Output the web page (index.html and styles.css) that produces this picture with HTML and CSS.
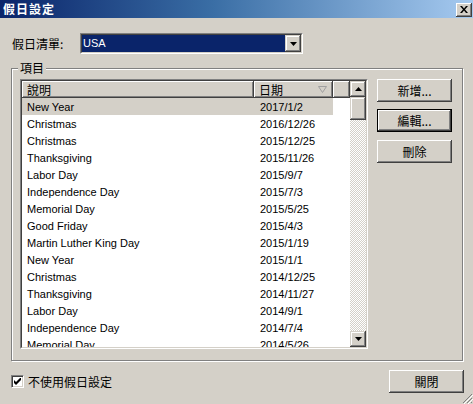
FILE: index.html
```html
<!DOCTYPE html>
<html lang="zh-Hant">
<head>
<meta charset="utf-8">
<title>假日設定</title>
<link rel="stylesheet" href="styles.css">
</head>
<body>
<div class="window">
  <div class="titlebar">
    <span class="title">假日設定</span>
    <span class="tb-close"><svg width="8" height="7" viewBox="0 0 8 7"><path d="M0 0h2l2 2.5L6 0h2L5 3.5 8 7H6L4 4.5 2 7H0l3-3.5z" fill="#000"/></svg></span>
  </div>
  <div class="content">
    <div class="combo-row">
      <span class="lbl cjk">假日清單:</span>
      <div class="combo">
        <span class="combo-value">USA</span>
        <span class="combo-btn"><svg width="7" height="4" viewBox="0 0 7 4"><path d="M0 0h7L3.5 4z" fill="#000"/></svg></span>
      </div>
    </div>

    <div class="group">
      <span class="legend cjk">項目</span>
      <div class="listview">
        <div class="lv-inner">
          <div class="lv-main">
            <div class="lv-header">
              <div class="hd hd-name cjk">說明</div>
              <div class="hd hd-date cjk">日期<svg class="sort" width="9" height="7" viewBox="0 0 9 7"><path d="M0.5 0.5h8L4.5 6.5z" fill="none" stroke="#a0a0a0"/></svg></div>
              <div class="hd hd-fill"></div>
            </div>
            <div class="lv-rows">
              <div class="row selected"><span class="c-name">New Year</span><span class="c-date">2017/1/2</span></div>
              <div class="row"><span class="c-name">Christmas</span><span class="c-date">2016/12/26</span></div>
              <div class="row"><span class="c-name">Christmas</span><span class="c-date">2015/12/25</span></div>
              <div class="row"><span class="c-name">Thanksgiving</span><span class="c-date">2015/11/26</span></div>
              <div class="row"><span class="c-name">Labor Day</span><span class="c-date">2015/9/7</span></div>
              <div class="row"><span class="c-name">Independence Day</span><span class="c-date">2015/7/3</span></div>
              <div class="row"><span class="c-name">Memorial Day</span><span class="c-date">2015/5/25</span></div>
              <div class="row"><span class="c-name">Good Friday</span><span class="c-date">2015/4/3</span></div>
              <div class="row"><span class="c-name">Martin Luther King Day</span><span class="c-date">2015/1/19</span></div>
              <div class="row"><span class="c-name">New Year</span><span class="c-date">2015/1/1</span></div>
              <div class="row"><span class="c-name">Christmas</span><span class="c-date">2014/12/25</span></div>
              <div class="row"><span class="c-name">Thanksgiving</span><span class="c-date">2014/11/27</span></div>
              <div class="row"><span class="c-name">Labor Day</span><span class="c-date">2014/9/1</span></div>
              <div class="row"><span class="c-name">Independence Day</span><span class="c-date">2014/7/4</span></div>
              <div class="row"><span class="c-name">Memorial Day</span><span class="c-date">2014/5/26</span></div>
            </div>
          </div>
          <div class="scrollbar">
            <div class="sb-btn"><svg width="7" height="4" viewBox="0 0 7 4"><path d="M3.5 0L7 4H0z" fill="#000"/></svg></div>
            <div class="sb-thumb"></div>
            <div class="sb-track"></div>
            <div class="sb-btn"><svg width="7" height="4" viewBox="0 0 7 4"><path d="M0 0h7L3.5 4z" fill="#000"/></svg></div>
          </div>
        </div>
      </div>
      <div class="buttons">
        <button class="btn cjk">新增...</button>
        <button class="btn btn-default cjk">編輯...</button>
        <button class="btn cjk">刪除</button>
      </div>
    </div>

    <div class="footer">
      <label class="check cjk"><span class="box"><svg width="7" height="7" viewBox="0 0 7 7"><path d="M0 2v3l2 2 5-5V-1L2 4z" fill="#000"/></svg></span>不使用假日設定</label>
      <button class="btn btn-close cjk">關閉</button>
    </div>
  </div>
  <svg class="grip" width="11" height="11" viewBox="0 0 11 11"><path d="M10 1L1 10M10 5L5 10M10 9L9 10" stroke="#808080" stroke-width="1"/><path d="M11 2L2 11M11 6L6 11" stroke="#fff" stroke-width="1"/></svg>
</div>
</body>
</html>
```

FILE: styles.css
```css
* { box-sizing: border-box; }
html, body { margin: 0; padding: 0; }
body {
  width: 473px;
  height: 404px;
  overflow: hidden;
  background: #d4d0c8;
  font-family: "Liberation Sans", "Noto Sans CJK TC", sans-serif;
  font-size: 11px;
  color: #000;
}
.cjk {
  font-family: "Noto Sans CJK TC", "Liberation Sans", sans-serif;
  font-size: 12px;
}
.window {
  position: relative;
  width: 473px;
  height: 404px;
}
.titlebar {
  height: 18px;
  display: flex;
  align-items: center;
  padding: 0 1px 0 3px;
  background: linear-gradient(to right, #0a246a 0%, #3a6ea5 45%, #a6caf0 100%);
}
.title {
  font-family: "Noto Sans CJK TC", sans-serif;
  font-weight: bold;
  font-size: 12px;
  letter-spacing: 1px;
  color: #fff;
  line-height: 18px;
}
.tb-close {
  margin-left: auto;
  width: 16px;
  height: 14px;
  display: flex;
  align-items: center;
  justify-content: center;
  background: #d4d0c8;
  box-shadow: inset -1px -1px #404040, inset 1px 1px #fff, inset -2px -2px #808080;
  margin-top: 1px;
}
.content {
  padding: 0 10px 0 11px;
}
.combo-row {
  display: flex;
  align-items: center;
  margin-top: 15px;
  height: 21px;
}
.lbl {
  width: 69px;
  padding-left: 1px;
}
.combo {
  width: 223px;
  height: 21px;
  display: flex;
  border: 1px solid;
  border-color: #808080 #fff #fff #808080;
  padding: 0;
  position: relative;
}
.combo::before {
  content: "";
  position: absolute;
  inset: 0;
  border: 1px solid;
  border-color: #404040 #d4d0c8 #d4d0c8 #404040;
  pointer-events: none;
}
.combo-value {
  flex: 1;
  margin: 1px 0 1px 1px;
  background: #0a246a;
  color: #fff;
  line-height: 17px;
  padding-left: 1px;
}
.combo-btn {
  width: 16px;
  height: 17px;
  margin: 1px 1px 1px 0;
  display: flex;
  align-items: center;
  justify-content: center;
  background: #d4d0c8;
  box-shadow: inset -1px -1px #404040, inset 1px 1px #d4d0c8, inset -2px -2px #808080, inset 2px 2px #fff;
}
.group {
  position: relative;
  margin-top: 14px;
  width: 452px;
  height: 293px;
  border: 1px solid #808080;
  box-shadow: inset 1px 1px #fff, 1px 1px #fff;
  display: flex;
  align-items: flex-start;
  padding: 10px 10px 11px 8px;
}
.legend {
  position: absolute;
  left: 6px;
  top: -9px;
  padding: 0 2px;
  background: #d4d0c8;
  line-height: 16px;
}
.listview {
  width: 348px;
  height: 270px;
  border: 1px solid;
  border-color: #808080 #fff #fff #808080;
}
.lv-inner {
  width: 100%;
  height: 100%;
  border: 1px solid;
  border-color: #404040 #d4d0c8 #d4d0c8 #404040;
  display: flex;
  background: #fff;
}
.lv-main {
  width: 328px;
  height: 100%;
  overflow: hidden;
  display: flex;
  flex-direction: column;
}
.lv-header {
  display: flex;
  height: 17px;
  flex: none;
}
.hd {
  height: 17px;
  background: #d4d0c8;
  box-shadow: inset -1px -1px #404040, inset 1px 1px #fff, inset -2px -2px #808080;
  padding-left: 5px;
  line-height: 16px;
  display: flex;
  align-items: center;
}
.hd-name { width: 232px; }
.hd-date { width: 79px; }
.hd-fill { width: 17px; }
.sort {
  margin-left: auto;
  margin-right: 6px;
}
.lv-rows {
  flex: 1;
  overflow: hidden;
}
.row {
  display: flex;
  width: 311px;
  height: 17px;
  line-height: 17px;
  padding-top: 1px;
  white-space: nowrap;
}
.row.selected { background: #d4d0c8; }
.c-name { width: 232px; padding-left: 5px; line-height: 16px; }
.c-date { width: 79px; padding-left: 6px; line-height: 16px; }
.scrollbar {
  width: 16px;
  height: 100%;
  display: flex;
  flex-direction: column;
}
.sb-btn {
  width: 16px;
  height: 16px;
  flex: none;
  display: flex;
  align-items: center;
  justify-content: center;
  background: #d4d0c8;
  box-shadow: inset -1px -1px #404040, inset 1px 1px #d4d0c8, inset -2px -2px #808080, inset 2px 2px #fff;
}
.sb-thumb {
  height: 23px;
  flex: none;
  background: #d4d0c8;
  box-shadow: inset -1px -1px #404040, inset 1px 1px #d4d0c8, inset -2px -2px #808080, inset 2px 2px #fff;
}
.sb-track {
  flex: 1;
  background-image: conic-gradient(#d4d0c8 0 25%, #fff 0 50%, #d4d0c8 0 75%, #fff 0);
  background-size: 2px 2px;
}
.buttons {
  display: flex;
  flex-direction: column;
  margin-left: 9px;
}
.btn {
  width: 75px;
  height: 23px;
  border: 0;
  padding: 0;
  margin: 0;
  background: #d4d0c8;
  color: #000;
  box-shadow: inset -1px -1px #404040, inset 1px 1px #fff, inset -2px -2px #808080, inset 2px 2px #d4d0c8;
  line-height: 21px;
  text-align: center;
}
.buttons .btn + .btn { margin-top: 7px; }
.buttons .btn:last-child { margin-top: 8px; }
.btn-default {
  border: 1px solid #000;
}
.footer {
  display: flex;
  align-items: center;
  justify-content: space-between;
  margin-top: 9px;
  height: 23px;
  padding-right: 0;
}
.check {
  display: flex;
  align-items: center;
  line-height: 16px;
}
.box {
  width: 13px;
  height: 13px;
  margin-right: 4px;
  background: #fff;
  border: 1px solid;
  border-color: #808080 #fff #fff #808080;
  box-shadow: inset 1px 1px #404040, inset -1px -1px #d4d0c8;
  display: flex;
  align-items: center;
  justify-content: center;
}
.btn-close {
  width: 75px;
  margin-right: -1px;
}
.grip {
  position: absolute;
  right: 0;
  bottom: 0;
}
```
